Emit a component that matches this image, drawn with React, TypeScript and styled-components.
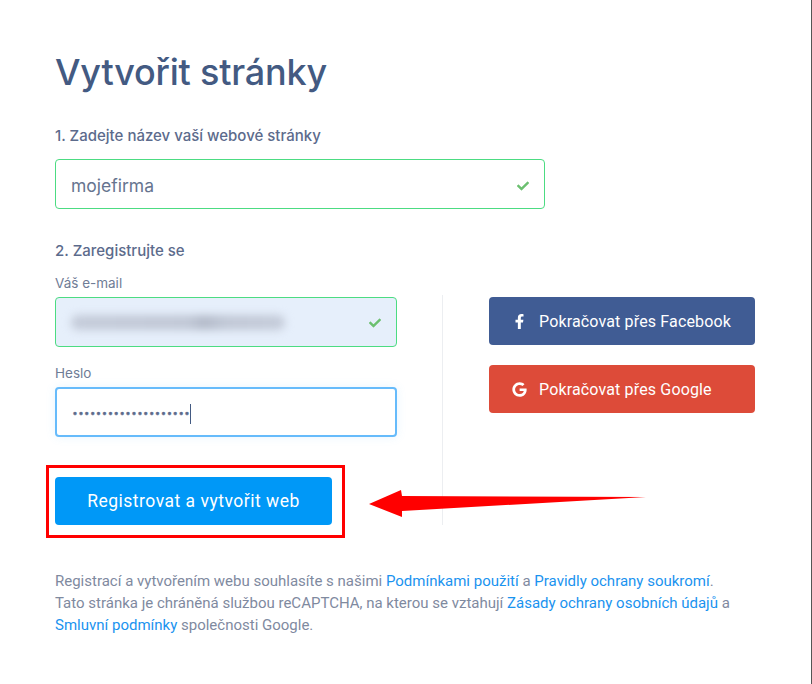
import React from "react";
import styled, { createGlobalStyle } from "styled-components";
import { FaFacebookF, FaGoogle, FaCheck } from "react-icons/fa";

const GlobalStyle = createGlobalStyle`
  html, body {
    margin: 0;
    padding: 0;
    background: #fff;
  }
  * {
    box-sizing: border-box;
  }
`;

const App = () => {
  return (
    <Page>
      <GlobalStyle />
      <Title>Vytvořit stránky</Title>
      <StepLabel>1. Zadejte název vaší webové stránky</StepLabel>
      <SiteField valid>
        <FieldText>mojefirma</FieldText>
        <CheckIcon />
      </SiteField>
      <StepTwo>2. Zaregistrujte se</StepTwo>
      <Columns>
        <FormColumn>
          <SmallLabel>Váš e-mail</SmallLabel>
          <Field valid autofilled>
            <BlurredEmail />
            <CheckIcon />
          </Field>
          <PasswordLabel>Heslo</PasswordLabel>
          <Field focused>
            <Dots>••••••••••••••••••••</Dots>
            <Caret />
          </Field>
          <Submit>Registrovat a vytvořit web</Submit>
        </FormColumn>
        <SocialColumn>
          <SocialButton color="#405c94">
            <SocialIcon>
              <FaFacebookF />
            </SocialIcon>
            Pokračovat přes Facebook
          </SocialButton>
          <SocialButton color="#dd4b39">
            <SocialIcon>
              <FaGoogle />
            </SocialIcon>
            Pokračovat přes Google
          </SocialButton>
        </SocialColumn>
      </Columns>
      <Legal>
        Registrací a vytvořením webu souhlasíte s našimi{" "}
        <a href="#">Podmínkami použití</a> a{" "}
        <a href="#">Pravidly ochrany soukromí</a>.
        <br />
        Tato stránka je chráněná službou reCAPTCHA, na kterou se vztahují{" "}
        <a href="#">Zásady ochrany osobních údajů</a> a
        <br />
        <a href="#">Smluvní podmínky</a> společnosti Google.
      </Legal>
      <Highlight />
      <Arrow viewBox="0 0 280 30" width="280" height="30">
        <polygon points="1,16 33,2 34,8 278,9 34,23 34,29" fill="#ff0000" />
      </Arrow>
    </Page>
  );
};

export default App;

const Page = styled.div`
  position: relative;
  width: 812px;
  height: 684px;
  padding: 49px 56px 0 55px;
  overflow: hidden;
  border-right: 1px solid #555;
  font-family: Inter, "Liberation Sans", sans-serif;
  color: #5c6b8c;
`;

const Title = styled.h1`
  margin: 0;
  font-size: 36px;
  line-height: 46px;
  font-weight: 500;
  letter-spacing: -0.2px;
  color: #435a82;
`;

const StepLabel = styled.div`
  margin-top: 31px;
  font-size: 15px;
  line-height: 20px;
  font-weight: 500;
  color: #5c6b8c;
`;

const StepTwo = styled(StepLabel)`
  margin-top: 32px;
`;

const Field = styled.div<{ valid?: boolean; focused?: boolean; autofilled?: boolean }>`
  position: relative;
  display: flex;
  align-items: center;
  justify-content: space-between;
  height: 50px;
  padding: ${(p) => (p.focused ? "3px 15px 0" : "1px 15px 0")};
  border-radius: 4px;
  border: ${(p) => (p.focused ? "2px solid #66bbfb" : "1px solid #4cdc82")};
  background: ${(p) => (p.autofilled ? "#e6effb" : "#fff")};
  box-shadow: ${(p) => (p.focused ? "0 0 10px rgba(102, 187, 251, 0.15)" : "none")};
  overflow: hidden;
`;

const SiteField = styled(Field)`
  width: 490px;
  margin-top: 13px;
  padding-top: 3px;
`;

const FieldText = styled.span`
  font-size: 17.5px;
  color: #66748f;
`;

const CheckIcon = styled(FaCheck)`
  width: 12px;
  height: 12px;
  color: #6cc070;
`;

const BlurredEmail = styled.div`
  width: 214px;
  height: 15px;
  border-radius: 7px;
  background: linear-gradient(90deg, #c4cbd9 0%, #c0c7d5 55%, #b2b9c8 62%, #c0c7d5 72%, #c4cbd9 100%);
  filter: blur(4px);
`;

const Dots = styled.span`
  font-family: "DejaVu Sans", sans-serif;
  font-size: 10px;
  color: #5c6b8c;
  -webkit-text-stroke: 0.4px #5c6b8c;
`;

const Caret = styled.span`
  width: 1px;
  height: 20px;
  background: #435a82;
  margin-right: auto;
`;

const Columns = styled.div`
  display: flex;
  margin-top: 3px;
`;

const FormColumn = styled.div`
  width: 342px;
`;

const SmallLabel = styled.div`
  margin-top: 9px;
  margin-bottom: 4px;
  font-size: 13.5px;
  line-height: 20px;
  color: #6f7c96;
`;

const PasswordLabel = styled(SmallLabel)`
  margin-top: 16px;
  margin-bottom: 4px;
`;

const Submit = styled.button`
  display: block;
  width: 277px;
  height: 48px;
  margin-top: 40px;
  border: none;
  border-radius: 4px;
  background: #0098f7;
  color: #fff;
  font-family: Roboto, sans-serif;
  font-size: 17.5px;
  letter-spacing: 0.5px;
`;

const SocialColumn = styled.div`
  display: flex;
  flex-direction: column;
  gap: 20px;
  height: 230px;
  margin-left: 45px;
  margin-top: 31px;
  padding: 2px 0 0 46px;
  border-left: 1px solid #eceef1;
`;

const SocialButton = styled.button<{ color: string }>`
  display: flex;
  align-items: center;
  width: 266px;
  height: 48px;
  padding: 1px 0 0;
  border: none;
  border-radius: 4px;
  background: ${(p) => p.color};
  color: #fff;
  font-family: Roboto, sans-serif;
  font-size: 16px;
  letter-spacing: 0.15px;
`;

const SocialIcon = styled.span`
  display: flex;
  justify-content: center;
  width: 20px;
  margin: 0 10px 0 20px;
  svg {
    width: 15px;
    height: 15px;
  }
`;

const Legal = styled.p`
  margin: 45px 0 0;
  font-family: Roboto, sans-serif;
  font-size: 15px;
  line-height: 22px;
  color: #7f8a9f;
  white-space: nowrap;
  a {
    color: #1a93ef;
    text-decoration: none;
  }
`;

const Highlight = styled.div`
  position: absolute;
  left: 46px;
  top: 465px;
  width: 299px;
  height: 73px;
  border: 3px solid #ff0000;
`;

const Arrow = styled.svg`
  position: absolute;
  left: 368px;
  top: 488px;
`;
